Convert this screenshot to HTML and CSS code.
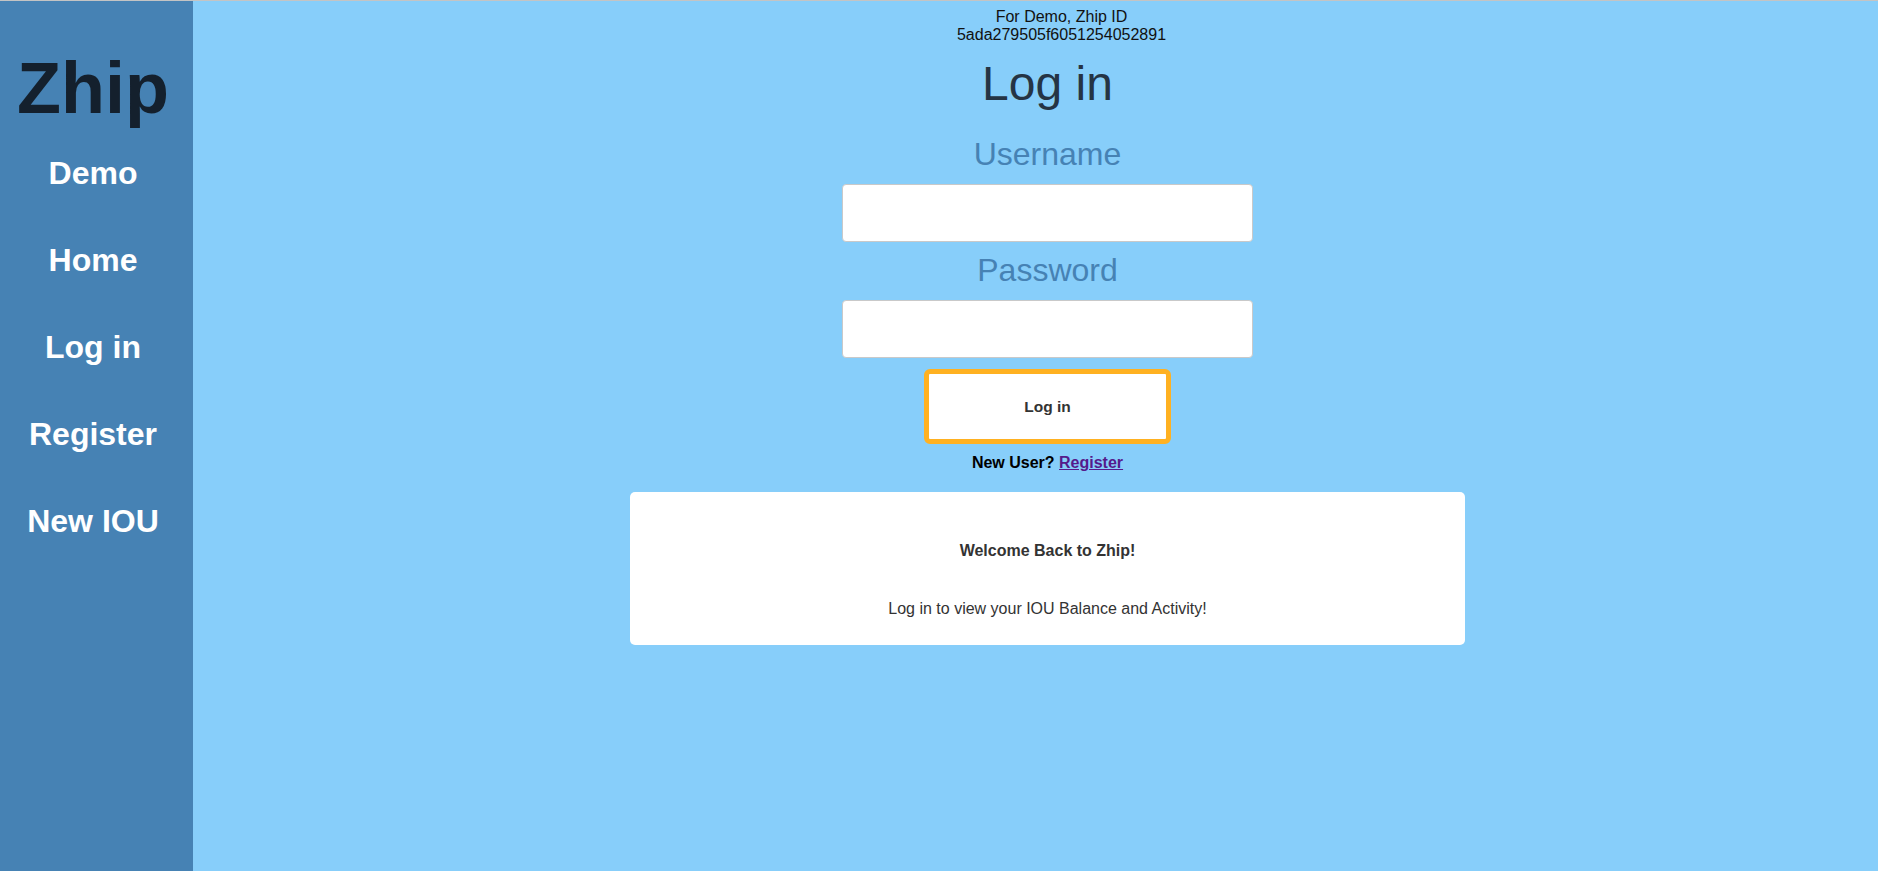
FILE: index.html
```html
<!DOCTYPE html>
<html lang="en">
<head>
<meta charset="utf-8">
<title>Zhip - Log in</title>
<link rel="stylesheet" href="styles.css">
</head>
<body>
<div class="app">
  <nav class="sidebar">
    <div class="logo">Zhip</div>
    <ul class="nav">
      <li><a class="nav-link" href="#">Demo</a></li>
      <li><a class="nav-link" href="#">Home</a></li>
      <li><a class="nav-link" href="#">Log in</a></li>
      <li><a class="nav-link" href="#">Register</a></li>
      <li><a class="nav-link" href="#">New IOU</a></li>
    </ul>
  </nav>
  <main class="main">
    <div class="demo-note">For Demo, Zhip ID<br>5ada279505f6051254052891</div>
    <h1 class="title">Log in</h1>
    <form class="login-form">
      <label class="field-label" for="username">Username</label>
      <input class="field-input" id="username" type="text">
      <label class="field-label" for="password">Password</label>
      <input class="field-input" id="password" type="password">
      <button class="login-btn" type="button">Log in</button>
    </form>
    <p class="new-user">New User? <a class="register-link" href="#">Register</a></p>
    <section class="card">
      <p class="card-title">Welcome Back to Zhip!</p>
      <p class="card-text">Log in to view your IOU Balance and Activity!</p>
    </section>
  </main>
</div>
</body>
</html>
```

FILE: styles.css
```css
* { box-sizing: border-box; }
html, body { height: 100%; }
body {
  margin: 0;
  border-top: 1px solid #c4c4c4;
  font-family: "Liberation Sans", Arial, sans-serif;
  background: #87cefa;
}
.app {
  display: flex;
  min-height: 870px;
}
.sidebar {
  width: 193px;
  flex: 0 0 193px;
  background: #4682b4;
  padding: 46px 7px 0 0;
  text-align: center;
}
.logo {
  font-size: 72px;
  font-weight: bold;
  color: #14202d;
  line-height: 83px;
}
.nav {
  list-style: none;
  margin: 0;
  padding: 0;
}
.nav-link {
  display: block;
  padding: 25px 0 25px;
  font-size: 32px;
  line-height: 37px;
  font-weight: bold;
  color: #ffffff;
  text-decoration: none;
}
.main {
  flex: 1;
  padding: 6.7px 0 0 24px;
  display: flex;
  flex-direction: column;
  align-items: center;
}
.demo-note {
  font-size: 16px;
  line-height: 18px;
  color: #111;
  text-align: center;
  padding-left: 28px;
}
.title {
  margin: 12.5px 0 0;
  font-size: 48px;
  line-height: 55px;
  font-weight: normal;
  color: #253444;
}
.login-form {
  display: flex;
  flex-direction: column;
  align-items: center;
  margin-top: 25px;
}
.field-label {
  font-size: 32px;
  line-height: 37px;
  color: #4682b4;
  margin-bottom: 11px;
}
.field-input {
  width: 411px;
  height: 58px;
  margin: 0 0 10px;
  border: 1px solid #c9c9c9;
  border-radius: 4px;
  background: #fff;
  font-size: 16px;
  padding: 0 10px;
}
.login-btn {
  width: 247px;
  height: 75px;
  margin-top: 1px;
  border: 5px solid #ffb121;
  border-radius: 6px;
  background: #fff;
  font-family: "Liberation Sans", Arial, sans-serif;
  font-size: 15.5px;
  font-weight: bold;
  color: #333;
}
.new-user {
  margin: 10px 0 0;
  font-size: 16px;
  line-height: 18px;
  font-weight: bold;
  color: #000;
}
.register-link {
  color: #551a8b;
  text-decoration: underline;
}
.card {
  width: 835px;
  height: 153px;
  margin-top: 20px;
  padding-top: 50px;
  background: #fff;
  border-radius: 5px;
  text-align: center;
  color: #333;
}
.card-title {
  margin: 0;
  font-size: 16px;
  line-height: 18px;
  font-weight: bold;
}
.card-text {
  margin: 40px 0 0;
  font-size: 16px;
  line-height: 18px;
}
```
